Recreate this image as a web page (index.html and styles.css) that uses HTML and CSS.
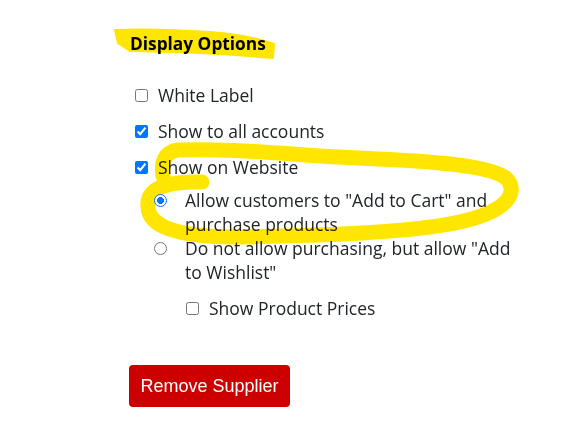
FILE: index.html
```html
<!DOCTYPE html>
<html lang="en">
<head>
    <meta charset="UTF-8">
    <meta name="viewport" content="width=device-width, initial-scale=1.0">
    <title>Supplier Display Options</title>
    <link rel="stylesheet" href="styles.css">
</head>
<body>
    <div class="panel">
        <h3 class="section-title">Display Options</h3>

        <!-- Visibility options -->
        <ul class="options">
            <li>
                <label class="check"><input type="checkbox"> <span>White Label</span></label>
            </li>
            <li>
                <label class="check"><input type="checkbox" checked> <span>Show to all accounts</span></label>
            </li>
            <li>
                <label class="check"><input type="checkbox" checked> <span>Show on Website</span></label>

                <ul class="sub-options">
                    <li>
                        <label class="radio"><input type="radio" name="purchase" checked> <span>Allow customers to "Add to Cart" and purchase products</span></label>
                    </li>
                    <li>
                        <label class="radio"><input type="radio" name="purchase"> <span>Do not allow purchasing, but allow "Add to Wishlist"</span></label>
                        <label class="check nested"><input type="checkbox"> <span>Show Product Prices</span></label>
                    </li>
                </ul>
            </li>
        </ul>

        <button class="btn-remove">Remove Supplier</button>

        <!-- highlighter marks -->
        <svg class="marker" width="577" height="427" viewBox="0 0 577 427">
            <path class="band" d="M115 30 C 150 29 200 30 230 34 C 250 37 265 40 274 44 L 273 58 C 250 56 220 54 200 53 C 170 52 140 51 130 51 L 118 43 Z" />
            <path class="loop" d="M202 182 C 172 181 146 186 148 207 C 149 226 175 236 230 237 C 320 236 420 232 464 221 C 512 209 518 190 506 178 C 490 166 440 162 380 159 C 300 156 240 148 178 150 C 164 152 161 163 163 176" />
        </svg>
    </div>
</body>
</html>
```

FILE: styles.css
```css
body {
    font-family: 'Open Sans', 'Noto Sans', sans-serif;
    background-color: #ffffff;
    color: #212529;
    margin: 0;
}

.panel {
    position: relative;
    width: 577px;
    height: 427px;
    padding: 32px 0 0 130px;
    box-sizing: border-box;
}

.section-title {
    margin: 0;
    font-size: 17.3px;
    line-height: 24px;
    font-weight: bold;
    color: #000;
}

.options {
    list-style: none;
    margin: 27px 0 0 0;
    padding: 0 0 0 5px;
    font-size: 17.5px;
    line-height: 24px;
}

.options > li {
    margin-bottom: 12px;
}

.check, .radio {
    display: flex;
    align-items: flex-start;
}

input {
    accent-color: #0075ff;
}

.check input {
    width: 13px;
    height: 13px;
    margin: 6px 10px 0 0;
    flex: none;
}

/* radio drawn by hand so the checked dot stays blue */
.radio input {
    appearance: none;
    -webkit-appearance: none;
    position: relative;
    z-index: 1;
    width: 13px;
    height: 13px;
    margin: 6px 18px 0 0;
    flex: none;
    border: 1px solid #767676;
    border-radius: 50%;
    background: #fff;
    box-sizing: border-box;
}

.radio input:checked {
    border-color: #0075ff;
    background: radial-gradient(circle, #0075ff 0 3.2px, #fff 3.7px);
}

.sub-options {
    list-style: none;
    margin: 9px 0 0 0;
    padding: 0 0 0 19px;
    width: 366px;
}

.check.nested {
    margin: 12px 0 0 32px;
}

.btn-remove {
    margin: 33px 0 0 -1px;
    width: 161px;
    height: 42px;
    background-color: #cc0000;
    color: white;
    border: none;
    border-radius: 4px;
    font-family: 'Liberation Sans', Arial, sans-serif;
    font-size: 18px;
    cursor: pointer;
}

.marker {
    position: absolute;
    left: 0;
    top: 0;
    pointer-events: none;
    mix-blend-mode: multiply;
}

.marker .band {
    fill: #ffe600;
    stroke: #ffe600;
    stroke-width: 2;
    stroke-linejoin: round;
}

.marker .loop {
    fill: none;
    stroke: #ffe600;
    stroke-width: 15;
    stroke-linecap: round;
    stroke-linejoin: round;
}
```
